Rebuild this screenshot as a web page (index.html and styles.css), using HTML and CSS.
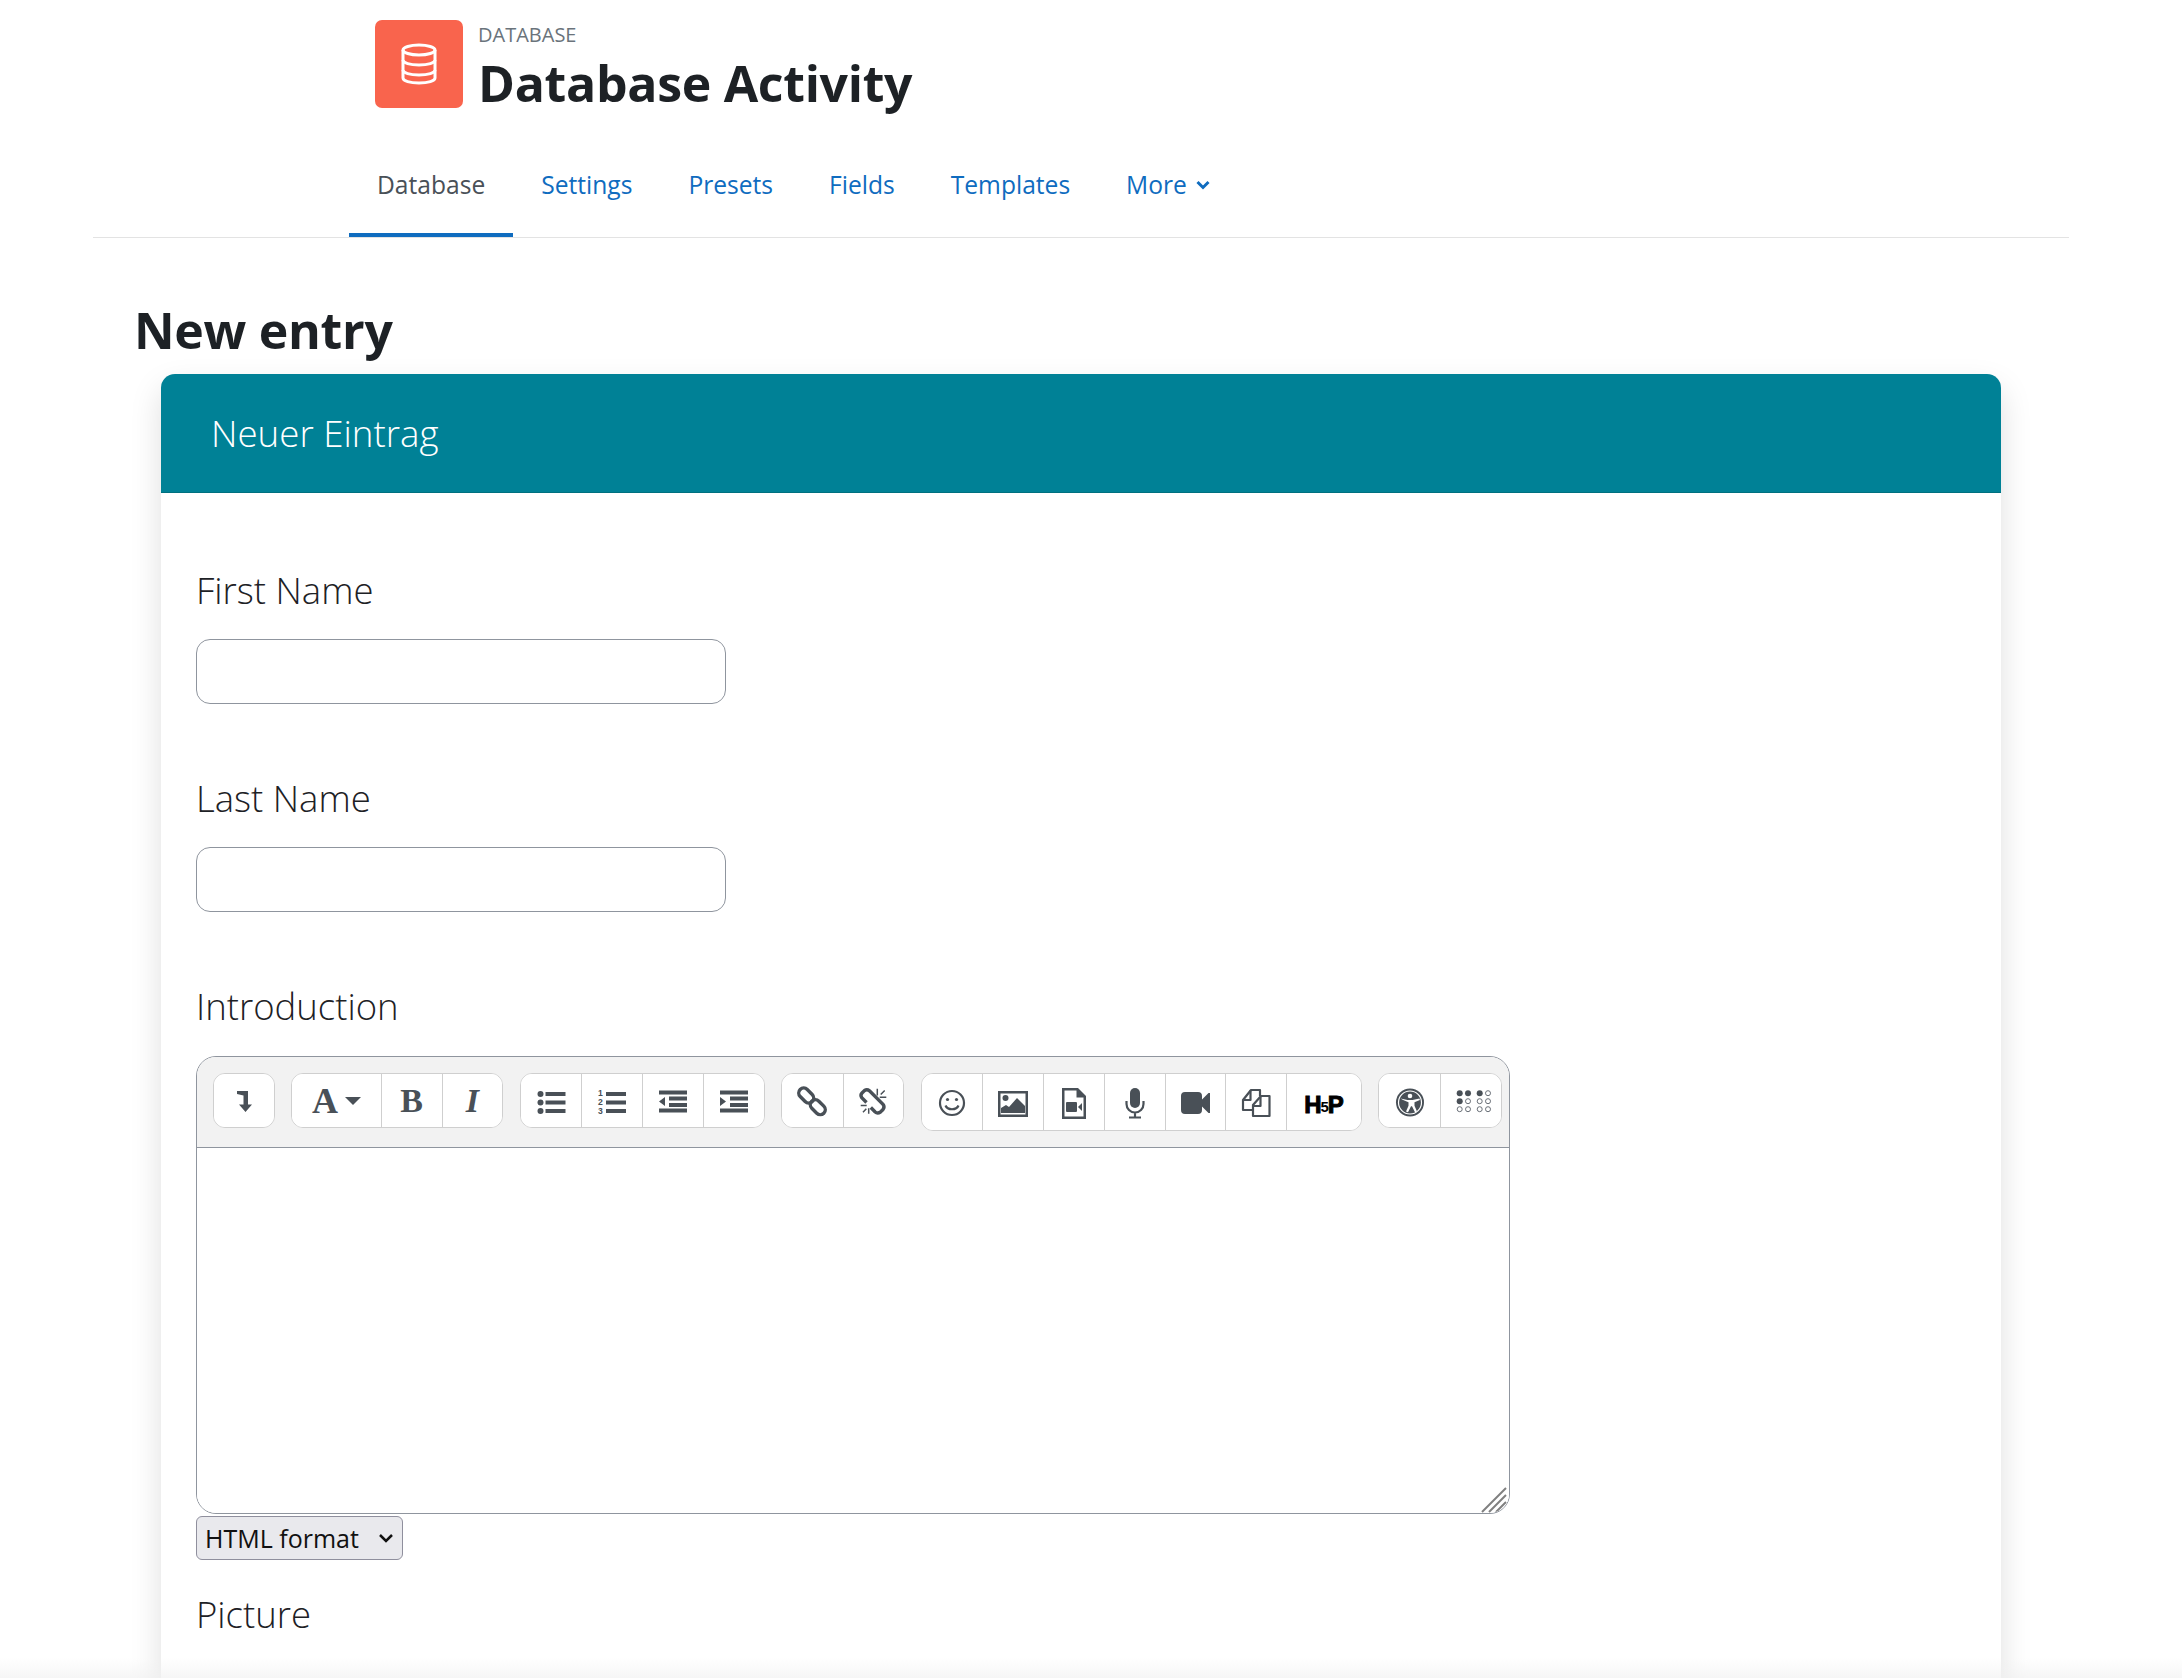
FILE: index.html
```html
<!DOCTYPE html>
<html lang="en">
<head>
<meta charset="utf-8">
<title>New entry</title>
<link rel="stylesheet" href="styles.css">
</head>
<body>
<header class="head">
  <div class="logo">
    <svg width="48" height="48" viewBox="0 0 48 48" fill="none" stroke="#fff" stroke-width="3"><ellipse cx="24" cy="10" rx="16" ry="5"/><path d="M8 10v28c0 3 7 5 16 5s16-2 16-5V10"/><path d="M8 20c0 3 7 5 16 5s16-2 16-5M8 30c0 3 7 5 16 5s16-2 16-5"/></svg>
  </div>
  <div class="titles">
    <div class="eyebrow">DATABASE</div>
    <h1 class="title">Database Activity</h1>
  </div>
</header>
<nav class="tabs">
  <a class="tab active">Database</a>
  <a class="tab">Settings</a>
  <a class="tab">Presets</a>
  <a class="tab">Fields</a>
  <a class="tab">Templates</a>
  <a class="tab">More <svg class="caret" width="16" height="16" viewBox="0 0 16 16" fill="none" stroke="currentColor" stroke-width="3"><path d="M2.500 5 8 10.500 13.500 5"/></svg></a>
</nav>
<h2 class="page-title">New entry</h2>
<main class="card">
  <div class="card-head">Neuer Eintrag</div>
  <div class="card-body">
    <label class="field-label">First Name</label>
    <input class="text-input" type="text">
    <label class="field-label">Last Name</label>
    <input class="text-input" type="text">
    <label class="field-label">Introduction</label>
    <div class="editor">
      <div class="toolbar">
        <div class="group">
          <button class="btn wide"><svg class="ic" viewBox="0 0 32 32"><path d="M9 6h11v13.500h4L17.500 27 11 19.500h4.500V10.500L9 9z"/></svg></button>
        </div>
        <div class="group">
          <button class="btn font"><span class="glyph big">A</span><span class="tri"></span></button>
          <button class="btn"><span class="glyph">B</span></button>
          <button class="btn"><span class="glyph ital">I</span></button>
        </div>
        <div class="group">
          <button class="btn"><svg class="ic" viewBox="0 0 32 32"><circle cx="5.500" cy="9" r="3"/><circle cx="5.500" cy="17.500" r="3"/><circle cx="5.500" cy="26" r="3"/><path d="M10.500 7h20v4h-20zM10.500 15.500h20v4h-20zM10.500 24h20v4h-20z"/></svg></button>
          <button class="btn"><svg class="ic" viewBox="0 0 32 32"><text class="num" x="2" y="11">1</text><text class="num" x="2" y="20">2</text><text class="num" x="2" y="29">3</text><path d="M10 7h20v4H10zM10 15.500h20v4H10zM10 24h20v4H10z"/></svg></button>
          <button class="btn"><svg class="ic" viewBox="0 0 32 32"><path d="M2 5.500h28v4H2zM12 11.500h18v4H12zM12 18h18v4H12zM2 23.500h28v4H2zM8 12v9l-6-4.500z"/></svg></button>
          <button class="btn"><svg class="ic" viewBox="0 0 32 32"><path d="M2 5.500h28v4H2zM12 11.500h18v4H12zM12 18h18v4H12zM2 23.500h28v4H2zM2 12v9l6-4.500z"/></svg></button>
        </div>
        <div class="group">
          <button class="btn"><svg class="ic ol" viewBox="0 0 32 32" stroke-width="3.400"><rect x="1.700" y="5.500" width="17" height="10" rx="5" transform="rotate(45 10.200 10.500)"/><rect x="13.300" y="17.200" width="17" height="10" rx="5" transform="rotate(45 21.800 22.200)"/></svg></button>
          <button class="btn"><svg class="ic ol" viewBox="0 0 32 32"><path stroke-width="3.400" d="M9.500 17.500 4.800 12.800Q3 10 5 8L7.500 5.500Q10 3.800 12.500 5.800L26 19.300Q28 22 26 24.500L23.500 27Q20.500 29 18.200 27L13.800 22.500"/><path stroke-width="1.500" d="M20.300 3.800v6.700M22.700 12.200h6.600M27.700 5.500l-4 4M3.700 20.500h6M11.700 23.200v5.600M6 27.200l3.300-3.400"/></svg></button>
        </div>
        <div class="group tall">
          <button class="btn"><svg class="ic ol" viewBox="0 0 32 32" stroke-width="2.200"><circle cx="16" cy="17" r="12"/><circle cx="11.500" cy="13.500" r="1.600" fill="#495057" stroke="none"/><circle cx="20.500" cy="13.500" r="1.600" fill="#495057" stroke="none"/><path d="M9.500 19.500c2 5 11 5 13 0"/></svg></button>
          <button class="btn"><svg class="ic" viewBox="0 0 32 32"><path fill-rule="evenodd" d="M1 5h30v26H1zM3.500 7.500v21h25v-21z"/><circle cx="8.500" cy="12" r="3"/><path d="M4 27v-5l5-3 3 2 8-9 8 8v7z"/></svg></button>
          <button class="btn"><svg class="ic" viewBox="0 0 32 32"><path fill-rule="evenodd" d="M4 2h16l8 8v23H4zM6.500 4.500v26h19V11.500h-7v-7z"/><path d="M9 16h9a1 1 0 0 1 1 1v8a1 1 0 0 1-1 1H9a1 1 0 0 1-1-1v-8a1 1 0 0 1 1-1zM20 21l4-4v8z"/></svg></button>
          <button class="btn"><svg class="ic" viewBox="0 0 32 32"><rect x="11" y="2" width="10" height="20" rx="5"/><path fill="none" stroke="#495057" stroke-width="2.200" d="M7.500 15v3a8.500 8.500 0 0 0 17 0v-3M16 27v4M10 31.500h12"/></svg></button>
          <button class="btn"><svg class="ic" viewBox="0 0 32 32"><path d="M6 6h13a4 4 0 0 1 4 4v3.500L29.500 7h1.500v20h-1.500L23 20.500V24a4 4 0 0 1-4 4H6a4 4 0 0 1-4-4V10a4 4 0 0 1 4-4z"/></svg></button>
          <button class="btn"><svg class="ic ol" viewBox="0 0 32 32" stroke-width="2.200" stroke-linejoin="round"><path d="M12 24H3V14l8-10h9v6"/><path d="M10.500 4.500V14H3"/><path d="M13 30V19l8-9h8.500v20z"/><path d="M20.500 10.500V20H13"/></svg></button>
          <button class="btn h5p-btn"><span class="h5p">H<i class="h5p-five">5</i>P</span></button>
        </div>
        <div class="group">
          <button class="btn"><svg class="ic" viewBox="0 0 32 32"><circle cx="16" cy="17.500" r="14"/><circle cx="16" cy="17.500" r="11.500" fill="none" stroke="#fff" stroke-width="1.200"/><circle cx="16" cy="11" r="2.300" fill="#fff"/><path fill="#fff" d="M6.500 13.500l7 1.500h5l7-1.500.4 1.600-5.400 2.200v3.500l2.500 5.700-2 .7-3-6h-1l-3 6-2-.7 2.500-5.700v-3.500l-5.400-2.200z"/></svg></button>
          <button class="btn"><svg class="ic" viewBox="0 0 32 32"><circle cx="4.700" cy="8.200" r="3"/><circle cx="13" cy="8.200" r="3"/><circle cx="24.700" cy="8.200" r="3"/><circle cx="4.700" cy="16.200" r="3"/><g fill="none" stroke="#6a7078" stroke-width="1"><circle cx="33" cy="8.200" r="2.500"/><circle cx="13" cy="16.200" r="2.500"/><circle cx="24.700" cy="16.200" r="2.500"/><circle cx="33" cy="16.200" r="2.500"/><circle cx="4.700" cy="24.200" r="2.500"/><circle cx="13" cy="24.200" r="2.500"/><circle cx="24.700" cy="24.200" r="2.500"/><circle cx="33" cy="24.200" r="2.500"/></g></svg></button>
        </div>
      </div>
      <div class="editor-area">
        <svg class="grip" width="26" height="26" viewBox="0 0 26 26" stroke="#808080" stroke-width="2"><path d="M1 25 25 1M8 25 25 8M15 25 25 15"/></svg>
      </div>
    </div>
    <select class="format"><option>HTML format</option></select>
    <label class="field-label last">Picture</label>
  </div>
</main>
<div class="fade"></div>
</body>
</html>
```
FILE: styles.css
```css
* { box-sizing: border-box; }
html, body { margin: 0; height: 1678px; overflow: hidden; background: #fff; }
body { font-family: "Open Sans", "Liberation Sans", sans-serif; color: #1d2125; position: relative; }

.head { display: flex; gap: 15px; height: 88px; margin: 20px 0 0 375px; }
.logo { width: 88px; height: 88px; border-radius: 7px; background: #f9644d; display: flex; align-items: center; justify-content: center; }
.titles { display: flex; flex-direction: column; }
.eyebrow { font-size: 20px; line-height: 30px; color: #6a737b; }
.title { margin: 0; font-size: 50px; line-height: 66px; font-weight: 700; letter-spacing: -0.3px; }

.tabs { display: flex; height: 130px; margin: 0 113px 0 93px; padding-left: 256px; border-bottom: 1px solid #e3e3e3; align-items: flex-end; }
.tab { display: flex; align-items: center; gap: 8px; height: 101px; padding: 0 28px 4px; font-size: 24.600px; color: #0f6cbf; }
.tab.active { color: #495057; border-bottom: 4px solid #0f6cbf; padding-bottom: 0; }

.page-title { margin: 58px 0 0 134px; font-size: 50px; line-height: 68px; height: 68px; font-weight: 700; letter-spacing: -0.3px; }
.card { width: 1840px; height: 1400px; margin: 10px 0 0 161px; background: #fff; border-radius: 14px 14px 0 0; box-shadow: 0 14px 32px rgba(0,0,0,.13); }
.card-head { height: 119px; padding-left: 50px; display: flex; align-items: center; background: #008196; color: #fff; font-size: 36.700px; font-weight: 300; border-radius: 14px 14px 0 0; border-bottom: 1px solid #00707f; }
.card-body { padding: 72px 0 0 35px; display: flex; flex-direction: column; align-items: flex-start; }

.field-label { display: block; height: 50px; line-height: 50px; margin-bottom: 24px; font-size: 36.500px; font-weight: 300; color: #1d2125; }
.field-label.last { margin: 29px 0 0; }
.text-input { display: block; width: 530px; height: 65px; margin-bottom: 69px; border: 1px solid #8f959e; border-radius: 14px; background: #fff; }

.editor { width: 1314px; height: 458px; border: 1px solid #8f959e; border-radius: 20px; overflow: hidden; margin-top: 1px; }
.toolbar { display: flex; align-items: flex-start; gap: 16.250px; height: 91px; padding: 16px 0 0 16px; background: #f2f2f2; border-bottom: 1px solid #8f959e; }
.group { display: flex; height: 55px; background: #fff; border: 1px solid #cfcfcf; border-radius: 12px; overflow: hidden; }
.group.tall { height: 58px; }
.btn { display: flex; align-items: center; justify-content: center; width: 60.750px; padding: 0; border: 0; border-left: 1px solid #cfcfcf; background: #fff; color: #495057; font-family: "Liberation Serif", serif; }
.btn:first-child { border-left: 0; }
.btn.wide { width: 60px; }
.btn.font { width: 88.500px; gap: 7px; }
.btn.h5p-btn { width: 75px; }
.ic { width: 32px; height: 32px; fill: #495057; overflow: visible; }
.ic.ol { fill: none; stroke: #495057; }
.num { font-family: "Liberation Sans", sans-serif; font-size: 8.600px; font-weight: 700; }
.glyph { font-size: 34px; font-weight: 700; line-height: 1; }
.glyph.big { font-size: 36px; }
.glyph.ital { font-style: italic; }
.tri { width: 0; height: 0; border-left: 8px solid transparent; border-right: 8px solid transparent; border-top: 8px solid #495057; }
.h5p { font-family: "Liberation Sans", sans-serif; font-size: 24px; font-weight: 700; color: #000; -webkit-text-stroke: 1px #000; padding-top: 6px; }
.h5p-five { font-size: 15px; font-style: normal; -webkit-text-stroke: 0; position: relative; top: -1px; margin: 0 -1px; }

.editor-area { position: relative; height: 366px; background: #fff; }
.grip { position: absolute; right: 2px; bottom: 1px; }

.format { height: 44px; width: 207px; margin-top: 2px; padding: 0 8px; font-family: "Open Sans", sans-serif; font-size: 25px; color: #111; appearance: none; background: #e9e9ed url("data:image/svg+xml,%3Csvg xmlns='http://www.w3.org/2000/svg' width='16' height='16' fill='none' stroke='%23111' stroke-width='2.500'%3E%3Cpath d='M2 5l6 6 6-6'/%3E%3C/svg%3E") no-repeat right 8px center; border: 1px solid #8f8f9d; border-radius: 6px; }

.fade { position: absolute; left: 0; right: 0; bottom: 0; height: 20px; background: linear-gradient(to bottom, rgba(240,240,240,0), rgba(240,240,240,.6)); }
```
